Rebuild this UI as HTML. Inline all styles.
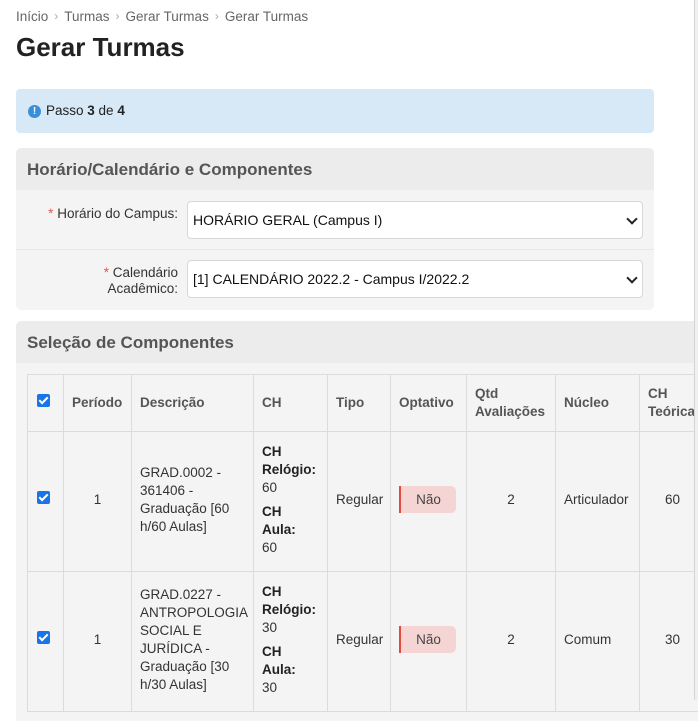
<!DOCTYPE html>
<html><head><meta charset="utf-8">
<style>
*{box-sizing:border-box;margin:0;padding:0}
body{width:698px;height:700px;overflow:hidden;background:#fff;font-family:"Liberation Sans",sans-serif;color:#333;position:relative}
.a{position:absolute}
.bc{top:9px;left:16px;font-size:13.5px;color:#666}
.bc span{color:#aaa;font-size:12px;margin:0 6px;position:relative;top:-1px}
h1{position:absolute;top:32px;left:16px;font-size:26px;font-weight:bold;color:#222}
.alert{left:16px;top:89px;width:638px;height:44px;background:#d7e9f7;border-radius:4px;font-size:13.5px;color:#222}
.card{background:#f4f4f4;border-radius:5px;overflow:hidden}
.ch{background:#ececec;font-size:17px;font-weight:bold;color:#555;padding-left:11px;height:42px;line-height:44px}
.lbl{font-size:13.5px;color:#333;text-align:right;font-weight:500}
.req{color:#e05a4f}
.sel{background:#fff;border:1px solid #d8d8d8;border-radius:4px;font-size:14px;color:#111;padding-left:5px;line-height:36px}
.chev{position:absolute;right:6px;top:13px;width:8px;height:8px;border-right:2.5px solid #222;border-bottom:2.5px solid #222;transform:rotate(45deg)}
table{border-collapse:collapse;table-layout:fixed;font-size:13.5px;color:#333}
td,th{border:1px solid #dcdcdc;vertical-align:middle;padding:0 8px;line-height:18px}
th{font-weight:bold;color:#555;text-align:left;height:57px}
td{height:140px;padding-bottom:4px}
.cb{width:13px;height:13px;background:#1a73e8;border-radius:2px;display:inline-block;position:relative;margin-left:1px}
.cb:after{content:"";position:absolute;left:4px;top:1px;width:3px;height:7px;border-right:2px solid #fff;border-bottom:2px solid #fff;transform:rotate(45deg)}
.nao{display:inline-block;width:57px;height:27px;line-height:27px;background:#f5d5d3;border-left:2px solid #e04a3f;border-radius:0 5px 5px 0;text-align:center;color:#444}
.c{text-align:center}
b{color:#222}
</style></head><body>
<div class="a bc">Início<span>›</span>Turmas<span>›</span>Gerar Turmas<span>›</span>Gerar Turmas</div>
<h1>Gerar Turmas</h1>
<div class="a alert"><div class="a" style="left:12px;top:16px;width:13px;height:13px;border-radius:50%;background:#3a8fd6;color:#fff;font-size:10px;font-weight:bold;text-align:center;line-height:13px">!</div><div class="a" style="left:30px;top:14px">Passo <b>3</b> de <b>4</b></div></div>

<div class="a card" style="left:16px;top:148px;width:638px;height:162px">
<div class="ch">Horário/Calendário e Componentes</div>
<div class="a lbl" style="left:0;top:58px;width:162px"><span class="req">*</span> Horário do Campus:</div>
<div class="a sel" style="left:171px;top:53px;width:456px;height:38px">HORÁRIO GERAL (Campus I)<div class="chev"></div></div>
<div class="a" style="left:0;top:101px;width:638px;height:1px;background:#e6e6e6"></div>
<div class="a lbl" style="left:0;top:117px;width:162px;line-height:16px"><span class="req">*</span> Calendário<br>Acadêmico:</div>
<div class="a sel" style="left:171px;top:112px;width:456px;height:38px">[1] CALENDÁRIO 2022.2 - Campus I/2022.2<div class="chev"></div></div>
</div>

<div class="a card" style="left:16px;top:321px;width:700px;height:400px;border-radius:5px 0 0 0">
<div class="ch">Seleção de Componentes</div>
<table class="a" style="left:11px;top:53px;width:700px">
<colgroup><col style="width:36px"><col style="width:68px"><col style="width:122px"><col style="width:74px"><col style="width:63px"><col style="width:76px"><col style="width:89px"><col style="width:84px"><col style="width:88px"></colgroup>
<tr><th><span class="cb"></span></th><th>Período</th><th>Descrição</th><th>CH</th><th>Tipo</th><th>Optativo</th><th>Qtd<br>Avaliações</th><th>Núcleo</th><th>CH<br>Teórica</th></tr>
<tr><td><span class="cb"></span></td><td class="c">1</td><td>GRAD.0002 -<br>361406 -<br>Graduação [60<br>h/60 Aulas]</td><td><b>CH<br>Relógio:</b><br>60<div style="height:6px"></div><b>CH<br>Aula:</b><br>60</td><td>Regular</td><td><span class="nao">Não</span></td><td class="c">2</td><td>Articulador</td><td class="c" style="padding-right:30px">60</td></tr>
<tr><td><span class="cb"></span></td><td class="c">1</td><td>GRAD.0227 -<br>ANTROPOLOGIA<br>SOCIAL E<br>JURÍDICA -<br>Graduação [30<br>h/30 Aulas]</td><td><b>CH<br>Relógio:</b><br>30<div style="height:6px"></div><b>CH<br>Aula:</b><br>30</td><td>Regular</td><td><span class="nao">Não</span></td><td class="c">2</td><td>Comum</td><td class="c" style="padding-right:30px">30</td></tr>
</table>
</div>
<div class="a" style="left:694px;top:0;width:4px;height:700px;background:#f0f0f0;border-left:1px solid #d4d4d4"></div>
</body></html>
